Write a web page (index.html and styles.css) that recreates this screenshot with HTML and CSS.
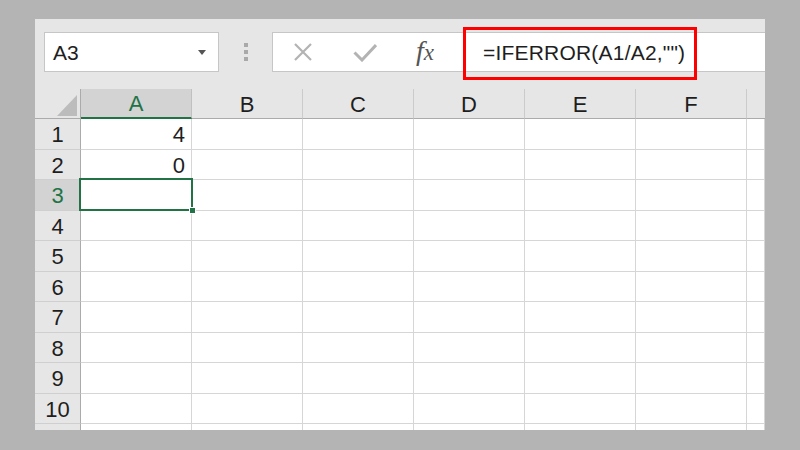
FILE: index.html
```html
<!DOCTYPE html>
<html>
<head>
<meta charset="utf-8">
<link rel="stylesheet" href="styles.css">
</head>
<body>
<div class="app">
  <div class="toolbar">
    <div class="namebox">
      <span class="name">A3</span>
      <svg class="dd" width="8" height="5" viewBox="0 0 8 5"><polygon points="0,0 8,0 4,5" fill="#555"/></svg>
    </div>
    <div class="grip"><i></i><i></i><i></i></div>
    <div class="fbar">
      <div class="fbtns">
        <svg class="ic-x" width="20" height="18" viewBox="0 0 20 18"><path d="M2 1 L18 17 M18 1 L2 17" stroke="#b3b3b3" stroke-width="2.2" fill="none"/></svg>
        <svg class="ic-ok" width="24" height="19" viewBox="0 0 24 19"><path d="M1.5 9.5 L9 17 L23 2" stroke="#b3b3b3" stroke-width="3" fill="none"/></svg>
        <span class="fx"><span class="f">f</span><span class="x">x</span></span>
      </div>
      <div class="finput">=IFERROR(A1/A2,"")</div>
    </div>
  </div>

  <div class="sheet">
    <div class="corner"><svg width="20" height="21" viewBox="0 0 20 21"><polygon points="0,21 20,21 20,0" fill="#bcbcbc"/></svg></div>
    <div class="ch sel">A</div>
    <div class="ch">B</div>
    <div class="ch">C</div>
    <div class="ch">D</div>
    <div class="ch">E</div>
    <div class="ch">F</div>
    <div class="ch last"></div>

    <div class="rh">1</div><div class="c num">4</div><div class="c"></div><div class="c"></div><div class="c"></div><div class="c"></div><div class="c"></div><div class="c"></div>
    <div class="rh">2</div><div class="c num">0</div><div class="c"></div><div class="c"></div><div class="c"></div><div class="c"></div><div class="c"></div><div class="c"></div>
    <div class="rh sel">3</div><div class="c active"><span class="selbox"><span class="handle"></span></span></div><div class="c"></div><div class="c"></div><div class="c"></div><div class="c"></div><div class="c"></div><div class="c"></div>
    <div class="rh">4</div><div class="c"></div><div class="c"></div><div class="c"></div><div class="c"></div><div class="c"></div><div class="c"></div><div class="c"></div>
    <div class="rh">5</div><div class="c"></div><div class="c"></div><div class="c"></div><div class="c"></div><div class="c"></div><div class="c"></div><div class="c"></div>
    <div class="rh">6</div><div class="c"></div><div class="c"></div><div class="c"></div><div class="c"></div><div class="c"></div><div class="c"></div><div class="c"></div>
    <div class="rh">7</div><div class="c"></div><div class="c"></div><div class="c"></div><div class="c"></div><div class="c"></div><div class="c"></div><div class="c"></div>
    <div class="rh">8</div><div class="c"></div><div class="c"></div><div class="c"></div><div class="c"></div><div class="c"></div><div class="c"></div><div class="c"></div>
    <div class="rh">9</div><div class="c"></div><div class="c"></div><div class="c"></div><div class="c"></div><div class="c"></div><div class="c"></div><div class="c"></div>
    <div class="rh">10</div><div class="c"></div><div class="c"></div><div class="c"></div><div class="c"></div><div class="c"></div><div class="c"></div><div class="c"></div>
    <div class="rh"></div><div class="c"></div><div class="c"></div><div class="c"></div><div class="c"></div><div class="c"></div><div class="c"></div><div class="c"></div>
  </div>
</div>
</body>
</html>
```

FILE: styles.css
```css
* { box-sizing: border-box; }
html, body { margin: 0; padding: 0; }
body {
  background: #b4b4b4;
  width: 800px;
  height: 450px;
  overflow: hidden;
  font-family: "Liberation Sans", Arial, sans-serif;
  color: #1e1e1e;
}
.app {
  margin: 19px 0 0 35px;
  width: 730px;
  height: 411px;
  background: #e6e6e6;
  overflow: hidden;
}
.toolbar {
  display: flex;
  height: 40px;
  margin-top: 13px;
  padding-left: 9px;
}
.namebox {
  width: 175px;
  background: #fff;
  border: 1px solid #c6c6c6;
  display: flex;
  align-items: center;
  padding: 0 12px 0 8px;
}
.name { flex: 1; font-size: 21px; padding-top: 2px; }
.dd { display: block; }
.grip {
  width: 53px;
  display: flex;
  flex-direction: column;
  align-items: center;
  justify-content: center;
  gap: 3px;
}
.grip i {
  display: block;
  width: 4px;
  height: 4px;
  background: #a9a9a9;
}
.fbar {
  flex: 1;
  display: flex;
  background: #fff;
  border: 1px solid #c6c6c6;
  border-right: none;
}
.fbtns {
  width: 190px;
  display: flex;
  align-items: center;
  padding-left: 20px;
}
.ic-x { display: block; }
.ic-ok { display: block; margin-left: 40px; }
.fx {
  margin-left: 39px;
  font-family: "Liberation Serif", "Times New Roman", serif;
  font-style: italic;
  color: #555;
  padding-bottom: 2px;
}
.fx .f { font-size: 28px; }
.fx .x { font-size: 23px; }
.finput {
  width: 234px;
  margin: -6px 0 -9px 0;
  border: 3px solid #ff0000;
  display: flex;
  align-items: center;
  padding: 0 0 1px 17px;
  font-size: 21px;
  letter-spacing: 0.2px;
  white-space: nowrap;
}
.sheet {
  margin-top: 17px;
  display: grid;
  grid-template-columns: 46px repeat(6, 111px) 1fr;
  grid-template-rows: 30px repeat(11, 30.5px);
}
.corner {
  border-right: 1px solid #ababab;
  border-bottom: 1px solid #ababab;
  display: flex;
  align-items: flex-end;
  justify-content: flex-end;
  padding: 0 3px 2px 0;
}
.corner svg { display: block; }
.ch {
  border-right: 1px solid #cbcbcb;
  border-bottom: 1px solid #ababab;
  display: flex;
  align-items: center;
  justify-content: center;
  font-size: 22px;
  padding-top: 2px;
}
.ch.sel {
  background: #d3d3d3;
  color: #217346;
  border-bottom: 2px solid #217346;
  border-right-color: #c0c0c0;
}
.ch.last { border-right: none; }
.rh {
  border-right: 1px solid #ababab;
  border-bottom: 1px solid #cfcfcf;
  display: flex;
  align-items: center;
  justify-content: center;
  font-size: 22px;
  padding-top: 3px;
}
.rh.sel { background: #d3d3d3; color: #217346; }
.c {
  background: #fff;
  border-right: 1px solid #d6d6d6;
  border-bottom: 1px solid #d6d6d6;
}
.c.num {
  display: flex;
  align-items: center;
  justify-content: flex-end;
  padding: 3px 6px 0 0;
  font-size: 22px;
}
.c.active { position: relative; }
.selbox {
  position: absolute;
  top: -2px;
  left: -2px;
  right: -2px;
  bottom: -1px;
  border: 2px solid #217346;
}
.handle {
  position: absolute;
  right: -5px;
  bottom: -5px;
  width: 7px;
  height: 7px;
  background: #217346;
  border: 1px solid #fff;
}
```
